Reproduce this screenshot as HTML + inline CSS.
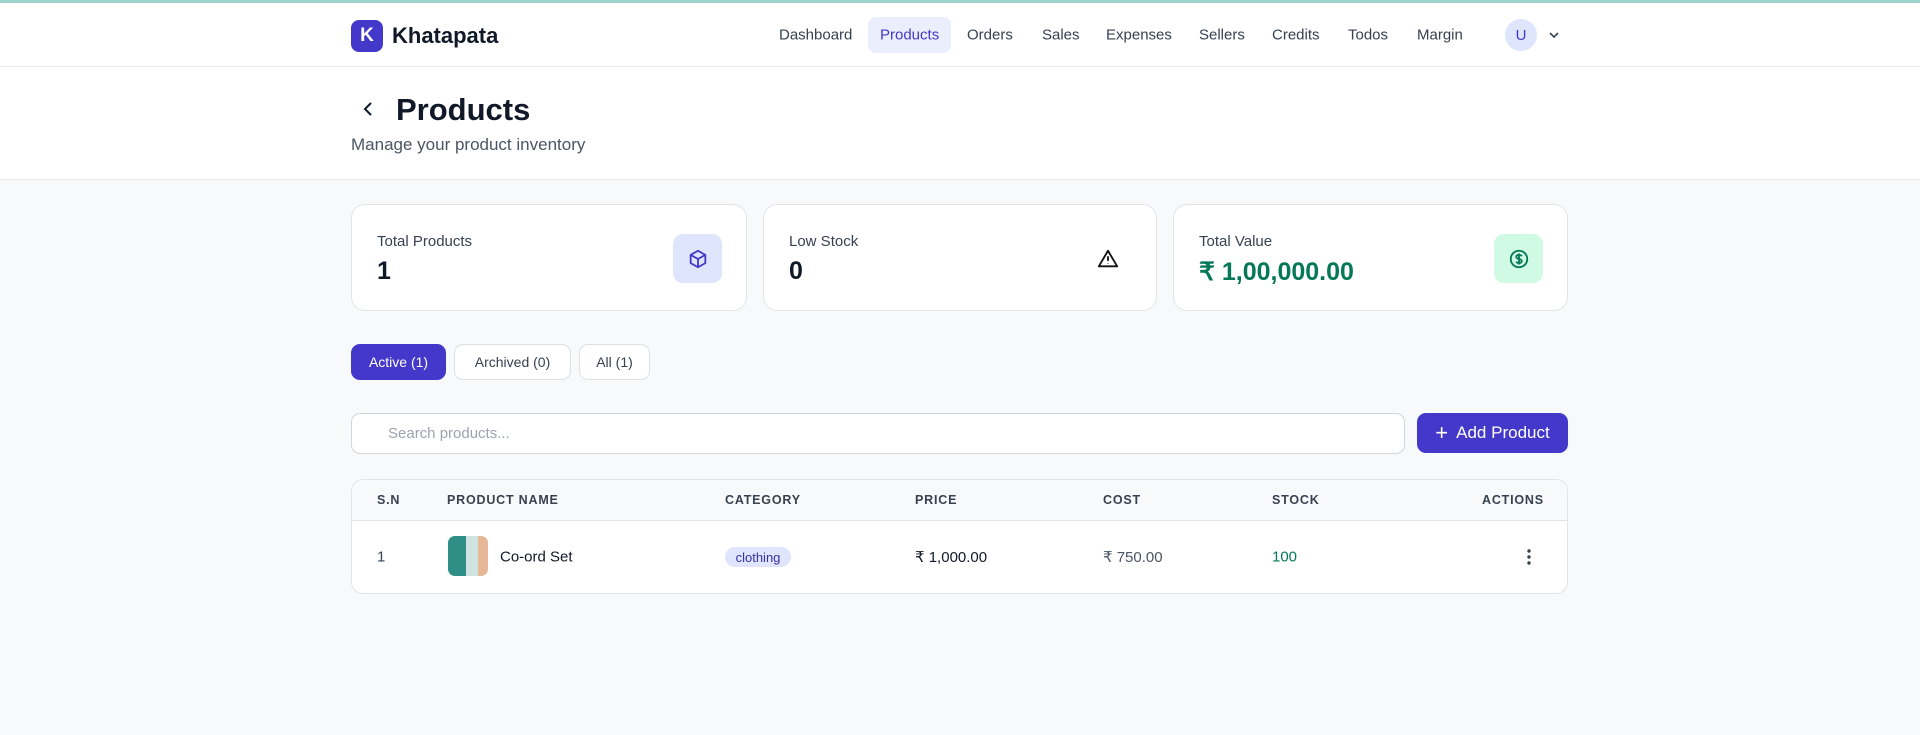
<!DOCTYPE html>
<html><head><meta charset="utf-8"><style>
*{box-sizing:border-box;margin:0;padding:0}
body{width:1920px;height:735px;background:#f8f9fb;font-family:"Liberation Sans",sans-serif;color:#111827;position:relative;overflow:hidden}
.abs{position:absolute}
.top{left:0;top:0;width:1920px;height:3px;background:#9fd3cf}
.hdr{left:0;top:3px;width:1920px;height:64px;background:#fff;border-bottom:1px solid #e5e7eb}
.nav a{position:absolute;top:35px;transform:translateY(-50%);font-size:15px;color:#374151;text-decoration:none}
.ph{left:0;top:67px;width:1920px;height:113px;background:#fff;border-bottom:1px solid #e5e7eb}
.card{background:#fff;border:1px solid #e2e4e8;border-radius:14px;top:204px;height:107px}
.card .l{position:absolute;left:25px;top:28px;font-size:15px;color:#374151}
.card .v{position:absolute;left:25px;top:52px;font-size:25px;font-weight:bold}
.ib{position:absolute;right:24px;top:29px;width:49px;height:49px;border-radius:10px;display:flex;align-items:center;justify-content:center}
.tab{top:344px;height:36px;border-radius:9px;font-size:14px;display:flex;align-items:center;justify-content:center;background:#fff;border:1px solid #dcdfe4;color:#374151}
.th{position:absolute;top:500px;transform:translateY(-50%);font-size:12.5px;font-weight:bold;letter-spacing:0.8px;color:#374151}
.td{position:absolute;top:557px;transform:translateY(-50%);font-size:15px}
</style></head><body>
<div class="abs top"></div>
<div class="abs hdr"></div>
<div class="abs" style="left:351px;top:20px;width:32px;height:32px;border-radius:8px;background:#4338ca;color:#fff;font-weight:bold;font-size:19px;display:flex;align-items:center;justify-content:center">K</div>
<div class="abs" style="left:392px;top:23px;font-size:22px;font-weight:bold">Khatapata</div>
<div class="abs" style="left:868px;top:17px;width:83px;height:36px;border-radius:8px;background:#eaeefd"></div>
<div class="nav">
<a style="left:779px">Dashboard</a><a style="left:880px;color:#4338ca">Products</a><a style="left:967px">Orders</a><a style="left:1042px">Sales</a><a style="left:1106px">Expenses</a><a style="left:1199px">Sellers</a><a style="left:1272px">Credits</a><a style="left:1348px">Todos</a><a style="left:1417px">Margin</a>
</div>
<div class="abs" style="left:1505px;top:19px;width:32px;height:32px;border-radius:50%;background:#dfe5fc;color:#4338ca;font-size:15px;display:flex;align-items:center;justify-content:center">U</div>
<svg class="abs" style="left:1547px;top:29px" width="14" height="12" viewBox="0 0 14 12"><path d="M3 4l4 4 4-4" fill="none" stroke="#374151" stroke-width="1.6"/></svg>
<div class="abs ph"></div>
<svg class="abs" style="left:360px;top:100px" width="18" height="18" viewBox="0 0 18 18"><path d="M11 3l-6 6 6 6" fill="none" stroke="#111827" stroke-width="2"/></svg>
<div class="abs" style="left:396px;top:92px;font-size:31px;font-weight:bold">Products</div>
<div class="abs" style="left:351px;top:135px;font-size:17px;color:#4b5563">Manage your product inventory</div>

<div class="abs card" style="left:351px;width:396px"><div class="l">Total Products</div><div class="v">1</div>
<div class="ib" style="background:#dfe5fc"><svg width="22" height="22" viewBox="0 0 24 24" fill="none" stroke="#4338ca" stroke-width="2" stroke-linejoin="round"><path d="M12 3l8 4.5v9L12 21l-8-4.5v-9z"/><path d="M4 7.5l8 4.5 8-4.5M12 12v9"/></svg></div></div>
<div class="abs card" style="left:763px;width:394px"><div class="l">Low Stock</div><div class="v">0</div>
<div class="ib"><svg width="22" height="22" viewBox="0 0 24 24" fill="none" stroke="#111" stroke-width="2" stroke-linejoin="round"><path d="M12 3L2 20h20z"/><path d="M12 9v5M12 17v.5"/></svg></div></div>
<div class="abs card" style="left:1173px;width:395px"><div class="l">Total Value</div><div class="v" style="color:#047857">₹ 1,00,000.00</div>
<div class="ib" style="background:#d1fae5"><svg width="22" height="22" viewBox="0 0 24 24" fill="none" stroke="#047857" stroke-width="2"><circle cx="12" cy="12" r="9"/><path d="M15 9c-.5-1-1.5-1.5-3-1.5-1.7 0-3 .8-3 2.2 0 3 6 1.6 6 4.5 0 1.4-1.3 2.3-3 2.3-1.6 0-2.6-.6-3-1.6M12 6v12"/></svg></div></div>

<div class="abs tab" style="left:351px;width:95px;background:#4338ca;border-color:#4338ca;color:#fff">Active (1)</div>
<div class="abs tab" style="left:454px;width:117px">Archived (0)</div>
<div class="abs tab" style="left:579px;width:71px">All (1)</div>

<div class="abs" style="left:351px;top:413px;width:1054px;height:41px;background:#fff;border:1px solid #d1d5db;border-radius:9px"></div>
<div class="abs" style="left:388px;top:425px;font-size:15px;color:#9ca3af">Search products...</div>
<div class="abs" style="left:1417px;top:413px;width:151px;height:40px;background:#4338ca;border-radius:9px;color:#fff;font-size:17px;display:flex;align-items:center;justify-content:center"><span style="font-size:22px;margin-right:8px;font-weight:300">+</span>Add Product</div>

<div class="abs" style="left:351px;top:479px;width:1217px;height:115px;background:#fff;border:1px solid #e2e4e8;border-radius:12px;overflow:hidden"><div style="height:41px;background:#f8f9fb;border-bottom:1px solid #e2e4e8"></div></div>
<div class="th" style="left:377px">S.N</div><div class="th" style="left:447px">PRODUCT NAME</div><div class="th" style="left:725px">CATEGORY</div><div class="th" style="left:915px">PRICE</div><div class="th" style="left:1103px">COST</div><div class="th" style="left:1272px">STOCK</div><div class="th" style="left:1482px">ACTIONS</div>
<div class="td" style="left:377px;color:#374151">1</div>
<div class="abs" style="left:448px;top:536px;width:40px;height:40px;border-radius:7px;background:linear-gradient(90deg,#2f8f86 0 45%,#cfe3df 45% 75%,#e6b898 75%)"></div>
<div class="td" style="left:500px">Co-ord Set</div>
<div class="abs" style="left:725px;top:547px;width:66px;height:20px;border-radius:10px;background:#dfe5fc;color:#3730a3;font-size:13px;display:flex;align-items:center;justify-content:center">clothing</div>
<div class="td" style="left:915px">₹ 1,000.00</div>
<div class="td" style="left:1103px;color:#4b5563">₹ 750.00</div>
<div class="td" style="left:1272px;color:#047857">100</div>
<svg class="abs" style="left:1526px;top:548px" width="6" height="18" viewBox="0 0 6 18"><circle cx="3" cy="3" r="1.7" fill="#374151"/><circle cx="3" cy="9" r="1.7" fill="#374151"/><circle cx="3" cy="15" r="1.7" fill="#374151"/></svg>
</body></html>
